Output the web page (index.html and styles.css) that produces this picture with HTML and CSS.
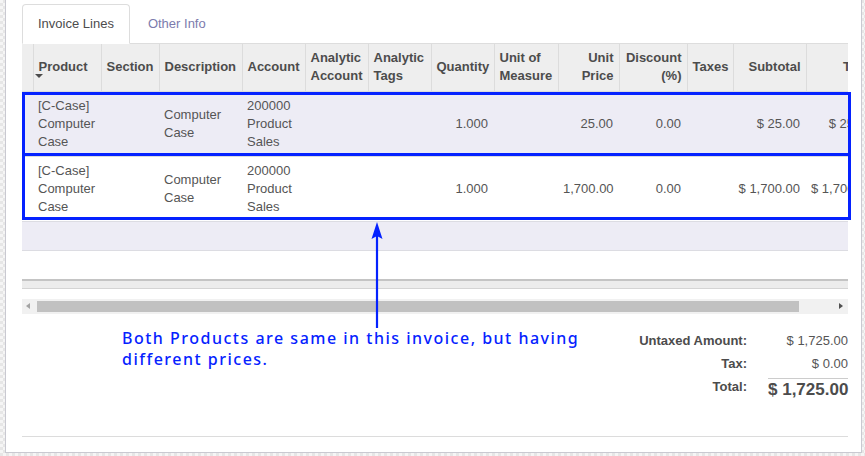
FILE: index.html
```html
<!DOCTYPE html>
<html>
<head>
<meta charset="utf-8">
<link rel="stylesheet" href="styles.css">
</head>
<body>
<div class="sheet">
  <div class="tabs">
    <div class="tab active">Invoice Lines</div>
    <div class="tab">Other Info</div>
  </div>
  <div class="grid-wrap">
    <table class="lines">
      <colgroup>
        <col style="width:11px"><col style="width:68px"><col style="width:58px"><col style="width:83px">
        <col style="width:63px"><col style="width:63px"><col style="width:63px"><col style="width:63px">
        <col style="width:64px"><col style="width:61px"><col style="width:68px"><col style="width:46px">
        <col style="width:73px"><col style="width:72px">
      </colgroup>
      <thead>
        <tr>
          <th class="handle"></th>
          <th class="sorted">Product<span class="caret"></span></th>
          <th>Section</th>
          <th>Description</th>
          <th>Account</th>
          <th>Analytic Account</th>
          <th>Analytic Tags</th>
          <th>Quantity</th>
          <th>Unit of Measure</th>
          <th class="num">Unit Price</th>
          <th class="num">Discount (%)</th>
          <th>Taxes</th>
          <th class="num">Subtotal</th>
          <th class="num">Total</th>
        </tr>
      </thead>
      <tbody>
        <tr class="odd">
          <td></td>
          <td>[C-Case] Computer Case</td>
          <td></td>
          <td>Computer Case</td>
          <td>200000 Product Sales</td>
          <td></td>
          <td></td>
          <td class="num">1.000</td>
          <td></td>
          <td class="num">25.00</td>
          <td class="num">0.00</td>
          <td></td>
          <td class="num">$&nbsp;25.00</td>
          <td class="num clip">$&nbsp;25.00</td>
        </tr>
        <tr>
          <td></td>
          <td>[C-Case] Computer Case</td>
          <td></td>
          <td>Computer Case</td>
          <td>200000 Product Sales</td>
          <td></td>
          <td></td>
          <td class="num">1.000</td>
          <td></td>
          <td class="num">1,700.00</td>
          <td class="num">0.00</td>
          <td></td>
          <td class="num">$&nbsp;1,700.00</td>
          <td class="num clip">$&nbsp;1,700.00</td>
        </tr>
        <tr class="filler odd"><td colspan="14"></td></tr>
        <tr class="filler"><td colspan="14"></td></tr>
      </tbody>
      <tfoot>
        <tr><td colspan="14"></td></tr>
      </tfoot>
    </table>
  </div>
  <div class="hscroll">
    <span class="arr left"></span>
    <div class="thumb"></div>
    <span class="arr right"></span>
  </div>
  <div class="bottom">
    <p class="note">Both Products are same in this invoice, but having different prices.</p>
    <div class="totals">
      <div class="lbl">Untaxed Amount:</div><div class="val">$&nbsp;1,725.00</div>
      <div class="lbl">Tax:</div><div class="val">$&nbsp;0.00</div>
      <div class="lbl total-lbl">Total:</div><div class="val total-val">$&nbsp;1,725.00</div>
    </div>
  </div>
  <div class="sep"></div>
</div>

<div class="mark mark1"></div>
<div class="mark mark2"></div>
<svg class="arrow" width="20" height="110" viewBox="0 0 20 110">
  <line x1="10" y1="12" x2="10" y2="106" stroke="#0522ff" stroke-width="2.2"/>
  <polygon points="10,0 4.5,17 10,14 15.5,17" fill="#0522ff"/>
</svg>
</body>
</html>
```

FILE: styles.css
```css
html, body {
  margin: 0;
  padding: 0;
}
body {
  width: 865px;
  height: 456px;
  overflow: hidden;
  position: relative;
  font-family: "Liberation Sans", Arial, sans-serif;
  font-size: 13px;
  color: #4c4c4c;
  background-color: #f2f2f2;
  background-image: repeating-conic-gradient(#e6e6e6 0 25%, #f5f5f5 0 50%);
  background-size: 6px 6px;
}
.sheet {
  margin-left: 5px;
  width: 857px;
  box-sizing: border-box;
  background: #fff;
  border: 1px solid #c9c9d1;
  border-top: none;
  padding: 4px 13px 15px 16px;
}
.tabs {
  display: flex;
  border-bottom: 1px solid #dddddd;
  height: 39px;
}
.tab {
  height: 39px;
  box-sizing: border-box;
  line-height: 37px;
  padding: 0 15px;
  margin-right: 2px;
  border: 1px solid transparent;
  border-radius: 4px 4px 0 0;
  color: #7c7bad;
}
.tab.active {
  color: #4c4c4c;
  background: #fff;
  border-color: #dddddd;
  border-bottom-color: #fff;
  height: 40px;
}
.grid-wrap {
  width: 826px;
  overflow: hidden;
}
.lines {
  table-layout: fixed;
  width: 856px;
  border-collapse: collapse;
}
.lines th {
  background: #eeeeee;
  font-weight: bold;
  text-align: left;
  line-height: 18px;
  height: 47px;
  padding: 0 5px 1px;
  box-sizing: border-box;
  border-right: 1px solid #dcdcdc;
  border-bottom: 1px solid #dcdcdc;
  vertical-align: middle;
  overflow: hidden;
  white-space: normal;
  color: #4c4c4c;
}
.lines th.handle {
  padding: 0;
}
.lines th.sorted {
  position: relative;
}
.caret {
  position: absolute;
  left: 1px;
  top: 30px;
  width: 0;
  height: 0;
  border-left: 4px solid transparent;
  border-right: 4px solid transparent;
  border-top: 4px solid #4c4c4c;
}
.lines .num {
  text-align: right;
}
.lines th:last-child {
  border-right: none;
  white-space: nowrap;
}
.lines td {
  line-height: 18px;
  padding: 5px 5px;
  height: 64px;
  box-sizing: border-box;
  vertical-align: middle;
  border-top: 1px solid #dcdcdc;
  overflow: hidden;
  white-space: normal;
  color: #555555;
}
.lines td.clip {
  white-space: nowrap;
}
.lines td.num {
  padding-right: 6px;
}
.lines tr.odd td {
  background: #edecf5;
}
.lines tr.filler td {
  height: 29px;
  padding: 0;
  border-top: 1px solid #dcdce2;
  border-bottom: 1px solid #dcdce2;
}
.lines tr.filler:last-child td {
  height: 30px;
}
.lines tfoot td {
  height: 8px;
  padding: 0;
  background: #ececec;
  border-top: 2px solid #c4c4c4;
  border-bottom: 1px solid #d4d4d4;
}
.hscroll {
  margin-top: 10px;
  width: 826px;
  height: 15px;
  background: #f1f1f1;
  display: flex;
  align-items: center;
  position: relative;
}
.thumb {
  margin-left: 15px;
  width: 762px;
  height: 11px;
  background: #c1c1c1;
}
.arr {
  position: absolute;
  top: 4px;
  width: 0;
  height: 0;
  border-top: 3.5px solid transparent;
  border-bottom: 3.5px solid transparent;
}
.arr.left {
  left: 4px;
  border-right: 4px solid #a3a3a3;
}
.arr.right {
  right: 5px;
  border-left: 4px solid #505050;
}
.bottom {
  display: flex;
  justify-content: space-between;
  margin-top: 15px;
}
.note {
  margin: -1px 0 0 100px;
  width: 480px;
  font-family: "Noto Sans", "DejaVu Sans", sans-serif;
  font-size: 16px;
  font-weight: 500;
  letter-spacing: 1.5px;
  line-height: 21px;
  color: #0522ff;
}
.totals {
  display: grid;
  grid-template-columns: auto 80px;
  column-gap: 21px;
  align-items: start;
}
.lbl {
  font-weight: bold;
  text-align: right;
  line-height: 23px;
  color: #4c4c4c;
}
.val {
  text-align: right;
  line-height: 23px;
  color: #555555;
}
.total-lbl {
  line-height: 16px;
  padding-top: 4px;
}
.total-val {
  margin-top: 3px;
  border-top: 1px solid #cccccc;
  font-size: 17px;
  font-weight: bold;
  line-height: 22px;
  color: #4c4c4c;
  white-space: nowrap;
}
.sep {
  margin-top: 35px;
  height: 1px;
  background: #dcdcdc;
}
.mark {
  position: absolute;
  left: 22px;
  width: 829px;
  border: 3px solid #0522ff;
  box-sizing: border-box;
}
.mark1 {
  top: 92px;
  height: 64px;
}
.mark2 {
  top: 153px;
  height: 67px;
}
.arrow {
  position: absolute;
  left: 367px;
  top: 222px;
}
```
